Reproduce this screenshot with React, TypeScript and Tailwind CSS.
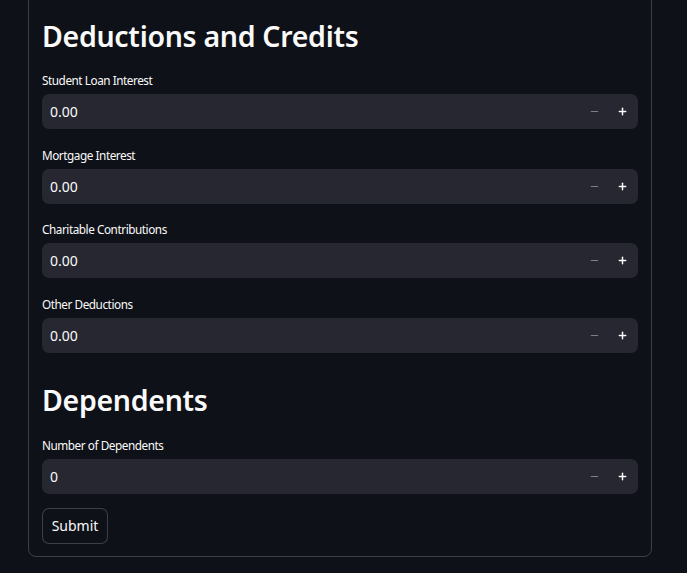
import { Minus, Plus } from "lucide-react";

const fields = [
  { label: "Student Loan Interest", value: "0.00" },
  { label: "Mortgage Interest", value: "0.00" },
  { label: "Charitable Contributions", value: "0.00" },
  { label: "Other Deductions", value: "0.00" },
];

function NumberField({ label, value }: { label: string; value: string }) {
  return (
    <div className="flex flex-col">
      <div className="h-[20px] pt-[2px] flex items-center text-[11.75px] tracking-[-0.45px] text-[#fafafa] leading-none">
        {label}
      </div>
      <div className="mt-[4px] h-[35px] w-full rounded-[7px] bg-[#262730] flex items-center">
        <div className="flex-1 pl-[8px] text-[14px] text-[#fafafa]">{value}</div>
        <button className="w-[28px] h-full flex items-center justify-center text-[#7d7f86] ml-[-1px]">
          <Minus size={11} strokeWidth={2.5} />
        </button>
        <button className="w-[28px] h-full flex items-center justify-center text-[#fafafa] mr-[2px]">
          <Plus size={11} strokeWidth={3.2} />
        </button>
      </div>
    </div>
  );
}

export default function App() {
  return (
    <div
      className="min-h-[573px] h-[573px] overflow-hidden bg-[#0e1117] text-[#fafafa]"
      style={{ fontFamily: '"Source Sans Pro", "Noto Sans", sans-serif' }}
    >
      <div className="ml-[28px] w-[624px] mt-[-20px] rounded-[8px] border border-[rgba(250,250,250,0.2)] px-[13px] pt-[37px] pb-[12px]">
        <h2 className="h-[36px] flex items-center text-[28.5px] font-semibold tracking-[-0.3px] leading-none">
          Deductions and Credits
        </h2>
        <div className="mt-[16px] flex flex-col gap-[15.5px]">
          {fields.map((f) => (
            <NumberField key={f.label} label={f.label} value={f.value} />
          ))}
        </div>
        <h2 className="mt-[30px] h-[36px] flex items-center text-[28.5px] font-semibold tracking-[-0.3px] leading-none">
          Dependents
        </h2>
        <div className="mt-[16px]">
          <NumberField label="Number of Dependents" value="0" />
        </div>
        <button className="mt-[14px] h-[36px] w-[66px] rounded-[7px] border border-[rgba(250,250,250,0.2)] bg-[#0e1117] text-[14px] text-[#fafafa]">
          Submit
        </button>
      </div>
    </div>
  );
}
